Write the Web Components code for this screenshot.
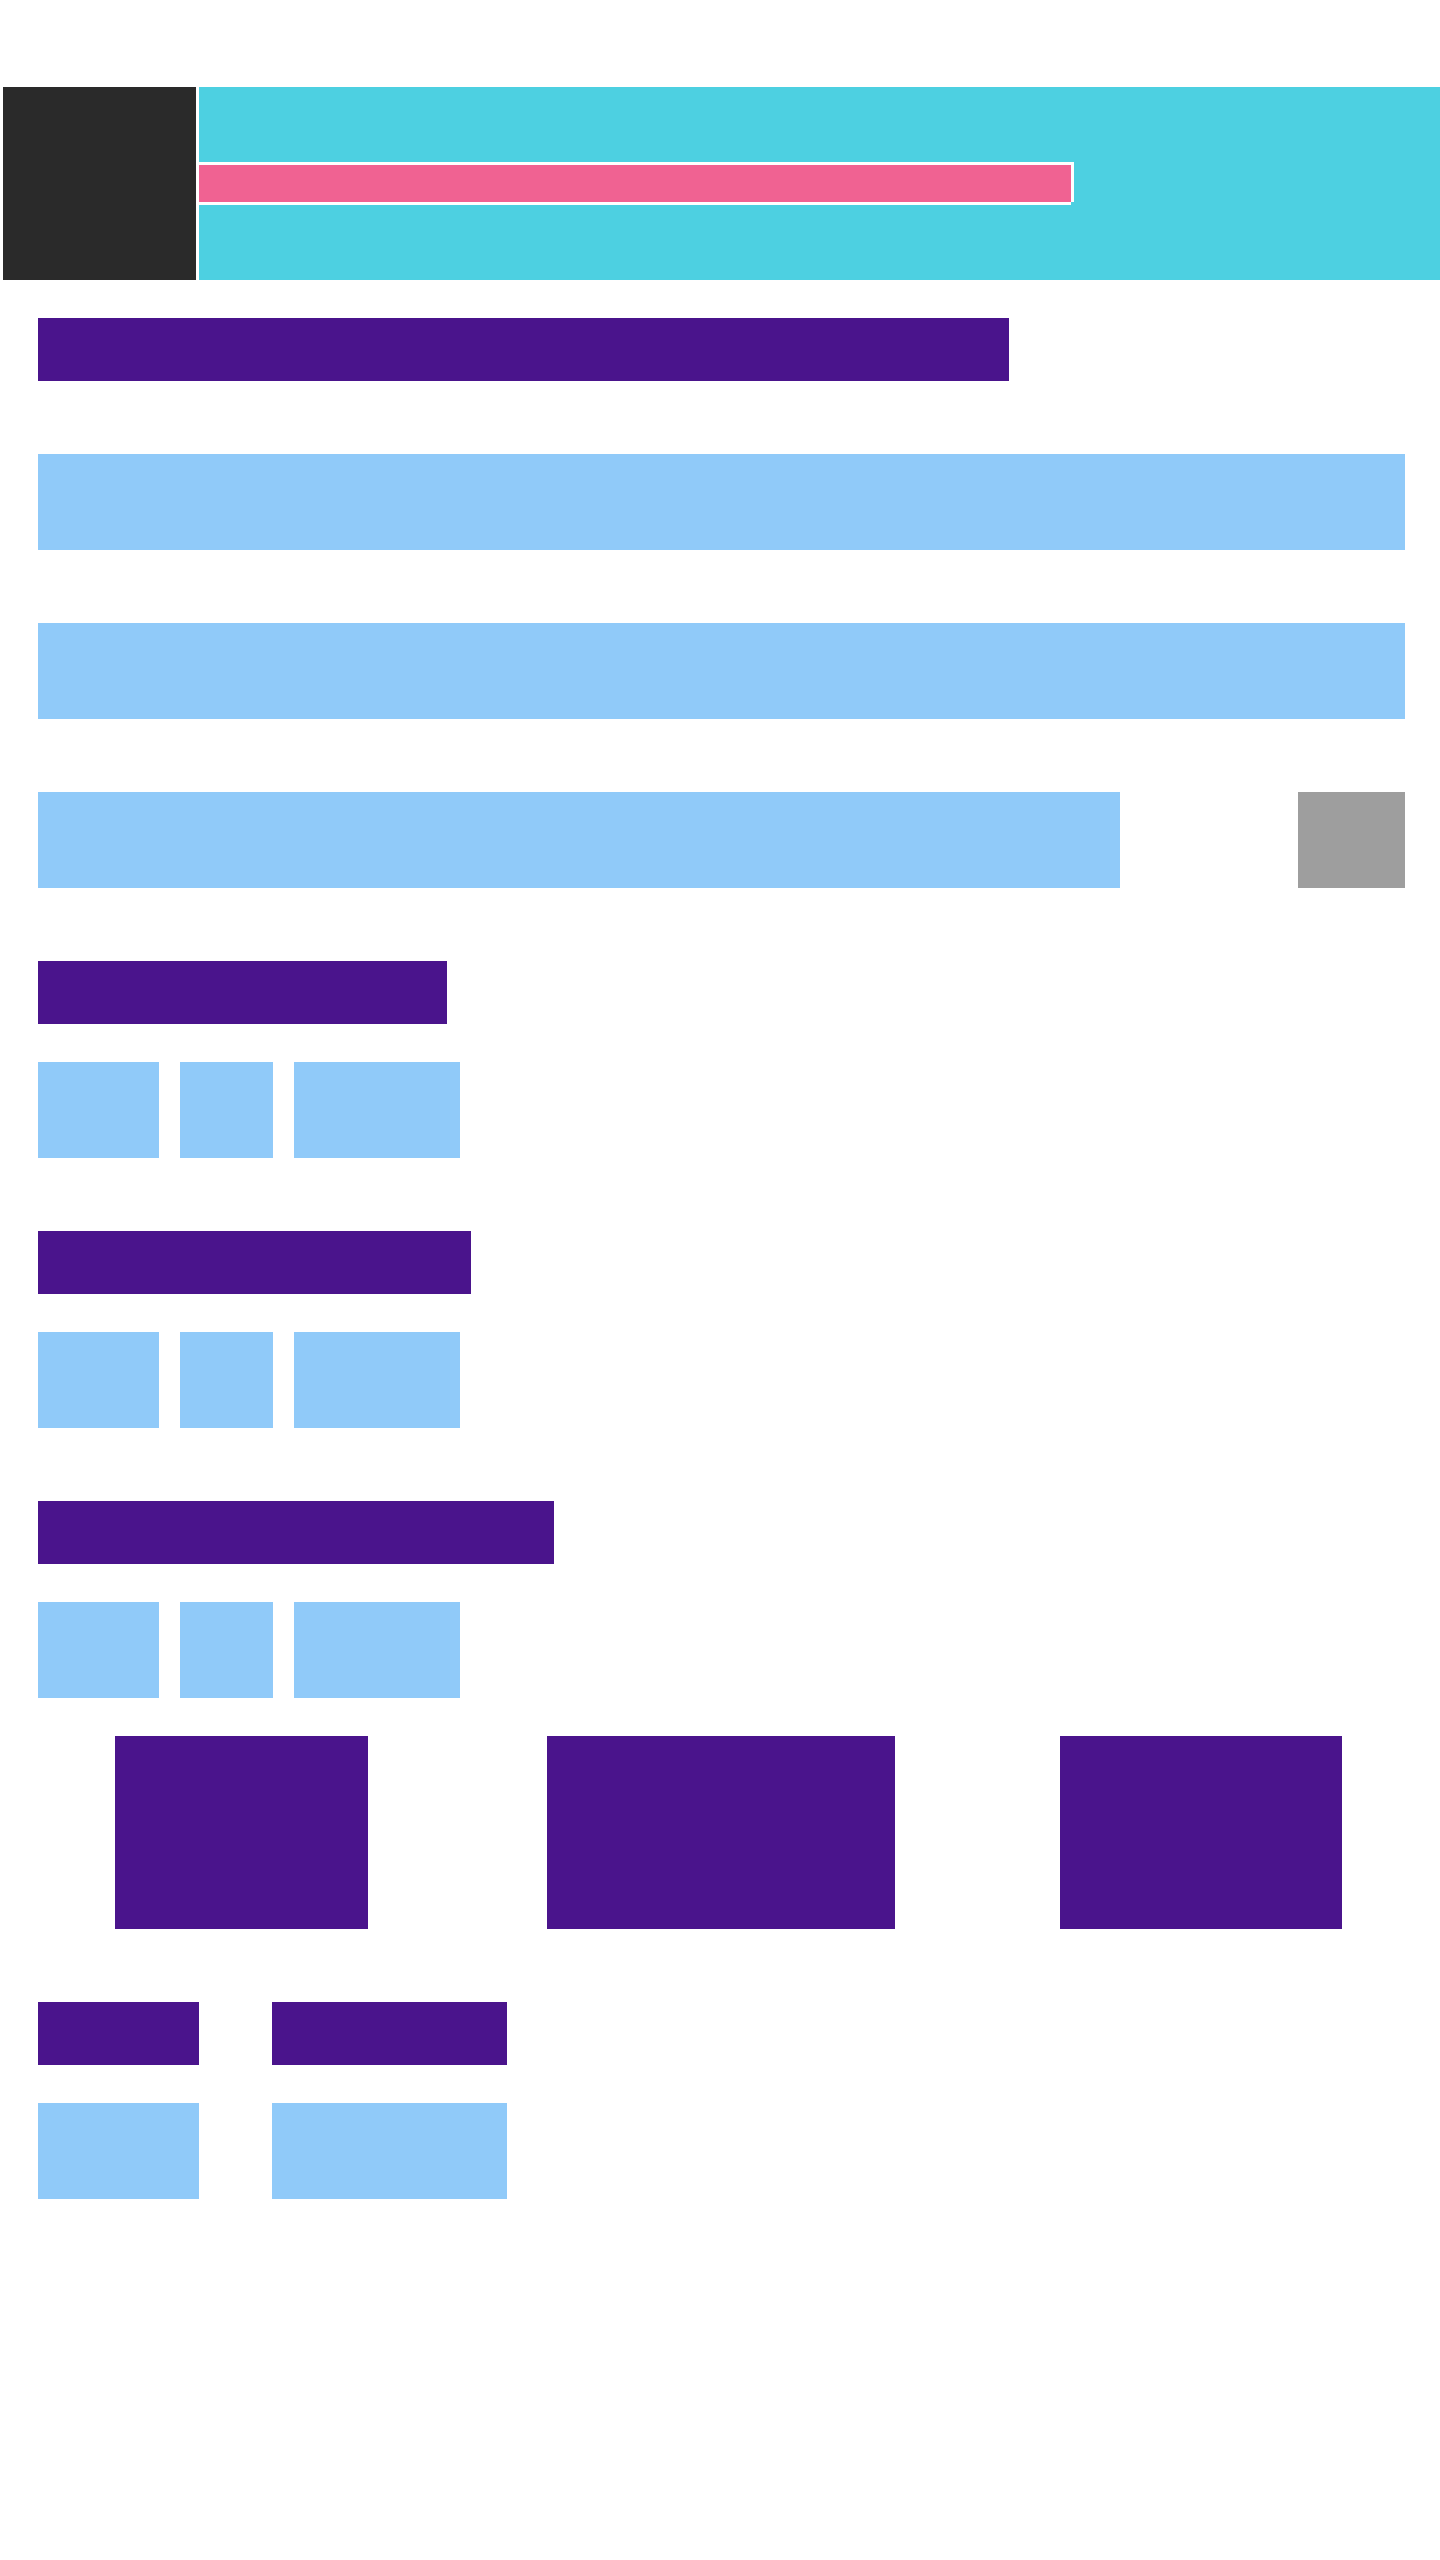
<!DOCTYPE html>
<html lang="en">
<head>
<meta charset="utf-8">
<title>Wireframe</title>
<style>
  body { margin: 0; background: #fff; font-family: "Liberation Sans", sans-serif; }
</style>
</head>
<body>
<wire-page></wire-page>
<script>
  // A solid placeholder; kind picks its colour and height, w its width.
  class WireBlock extends HTMLElement {
    connectedCallback() {
      const root = this.attachShadow({ mode: "open" });
      root.innerHTML = `<style>
        :host { display: block; box-sizing: border-box; max-width: 100%; height: 96px; background: #90caf9; }
        :host([kind="title"]) { height: 63px; background: #4a148c; }
        :host([kind="card"]) { height: 193px; background: #4a148c; }
        :host([kind="aside"]) { background: #9e9e9e; }
      </style>`;
      const w = this.getAttribute("w");
      if (w) this.style.width = w + "px";
    }
  }

  // Top bar: a square logo area and a progress strip on a coloured band.
  class WireHeader extends HTMLElement {
    connectedCallback() {
      this.attachShadow({ mode: "open" }).innerHTML = `<style>
        :host { display: flex; gap: 3px; padding-left: 3px; height: 193px; }
        .logo { flex: none; width: 193px; background: #2a2a2a; }
        .band { flex: 1; display: flex; flex-direction: column; justify-content: center; align-items: flex-start; background: #4dd0e1; }
        .strip { width: 872px; max-width: 100%; height: 37px; background: #f06292;
          box-shadow: 0 3px #fff, 3px 0 #fff, 0 -3px #fff, 3px -3px #fff; }
      </style><div class="logo"></div><div class="band"><div class="strip"></div></div>`;
    }
  }

  // A heading with its content 38px below.
  class WireGroup extends HTMLElement {
    connectedCallback() {
      this.attachShadow({ mode: "open" }).innerHTML = `<style>
        :host { display: flex; flex-direction: column; gap: 38px; }
        .items { display: flex; gap: 21px; }
      </style><slot name="title"></slot><div class="items"><slot></slot></div>`;
    }
  }

  class WirePage extends HTMLElement {
    connectedCallback() {
      const group = (title, items) => `<wire-group><wire-block slot="title" kind="title" w="${title}"></wire-block>${
        items.map(w => `<wire-block w="${w}"></wire-block>`).join("")}</wire-group>`;
      this.attachShadow({ mode: "open" }).innerHTML = `<style>
        :host { display: flex; flex-direction: column; gap: 38px; padding: 87px 0; }
        main { display: flex; flex-direction: column; gap: 73px; padding: 0 35px 0 38px; }
        .split { display: flex; justify-content: space-between; }
        .cards { display: grid; grid-template-columns: repeat(3, 1fr); gap: 3px; justify-items: center; padding: 0 1px 35px 3px; }
        footer { display: flex; gap: 73px; padding: 0 35px 0 38px; }
      </style>
      <wire-header></wire-header>
      <main>
        <wire-block kind="title" w="971"></wire-block>
        <wire-block></wire-block>
        <wire-block></wire-block>
        <div class="split"><wire-block w="1082"></wire-block><wire-block kind="aside" w="107"></wire-block></div>
        ${group(409, [121, 93, 166])}
        ${group(433, [121, 93, 166])}
        ${group(516, [121, 93, 166])}
      </main>
      <section class="cards">
        <wire-block kind="card" w="253"></wire-block>
        <wire-block kind="card" w="348"></wire-block>
        <wire-block kind="card" w="282"></wire-block>
      </section>
      <footer>${group(161, [161])}${group(235, [235])}</footer>`;
    }
  }

  customElements.define("wire-block", WireBlock);
  customElements.define("wire-header", WireHeader);
  customElements.define("wire-group", WireGroup);
  customElements.define("wire-page", WirePage);
</script>
</body>
</html>
